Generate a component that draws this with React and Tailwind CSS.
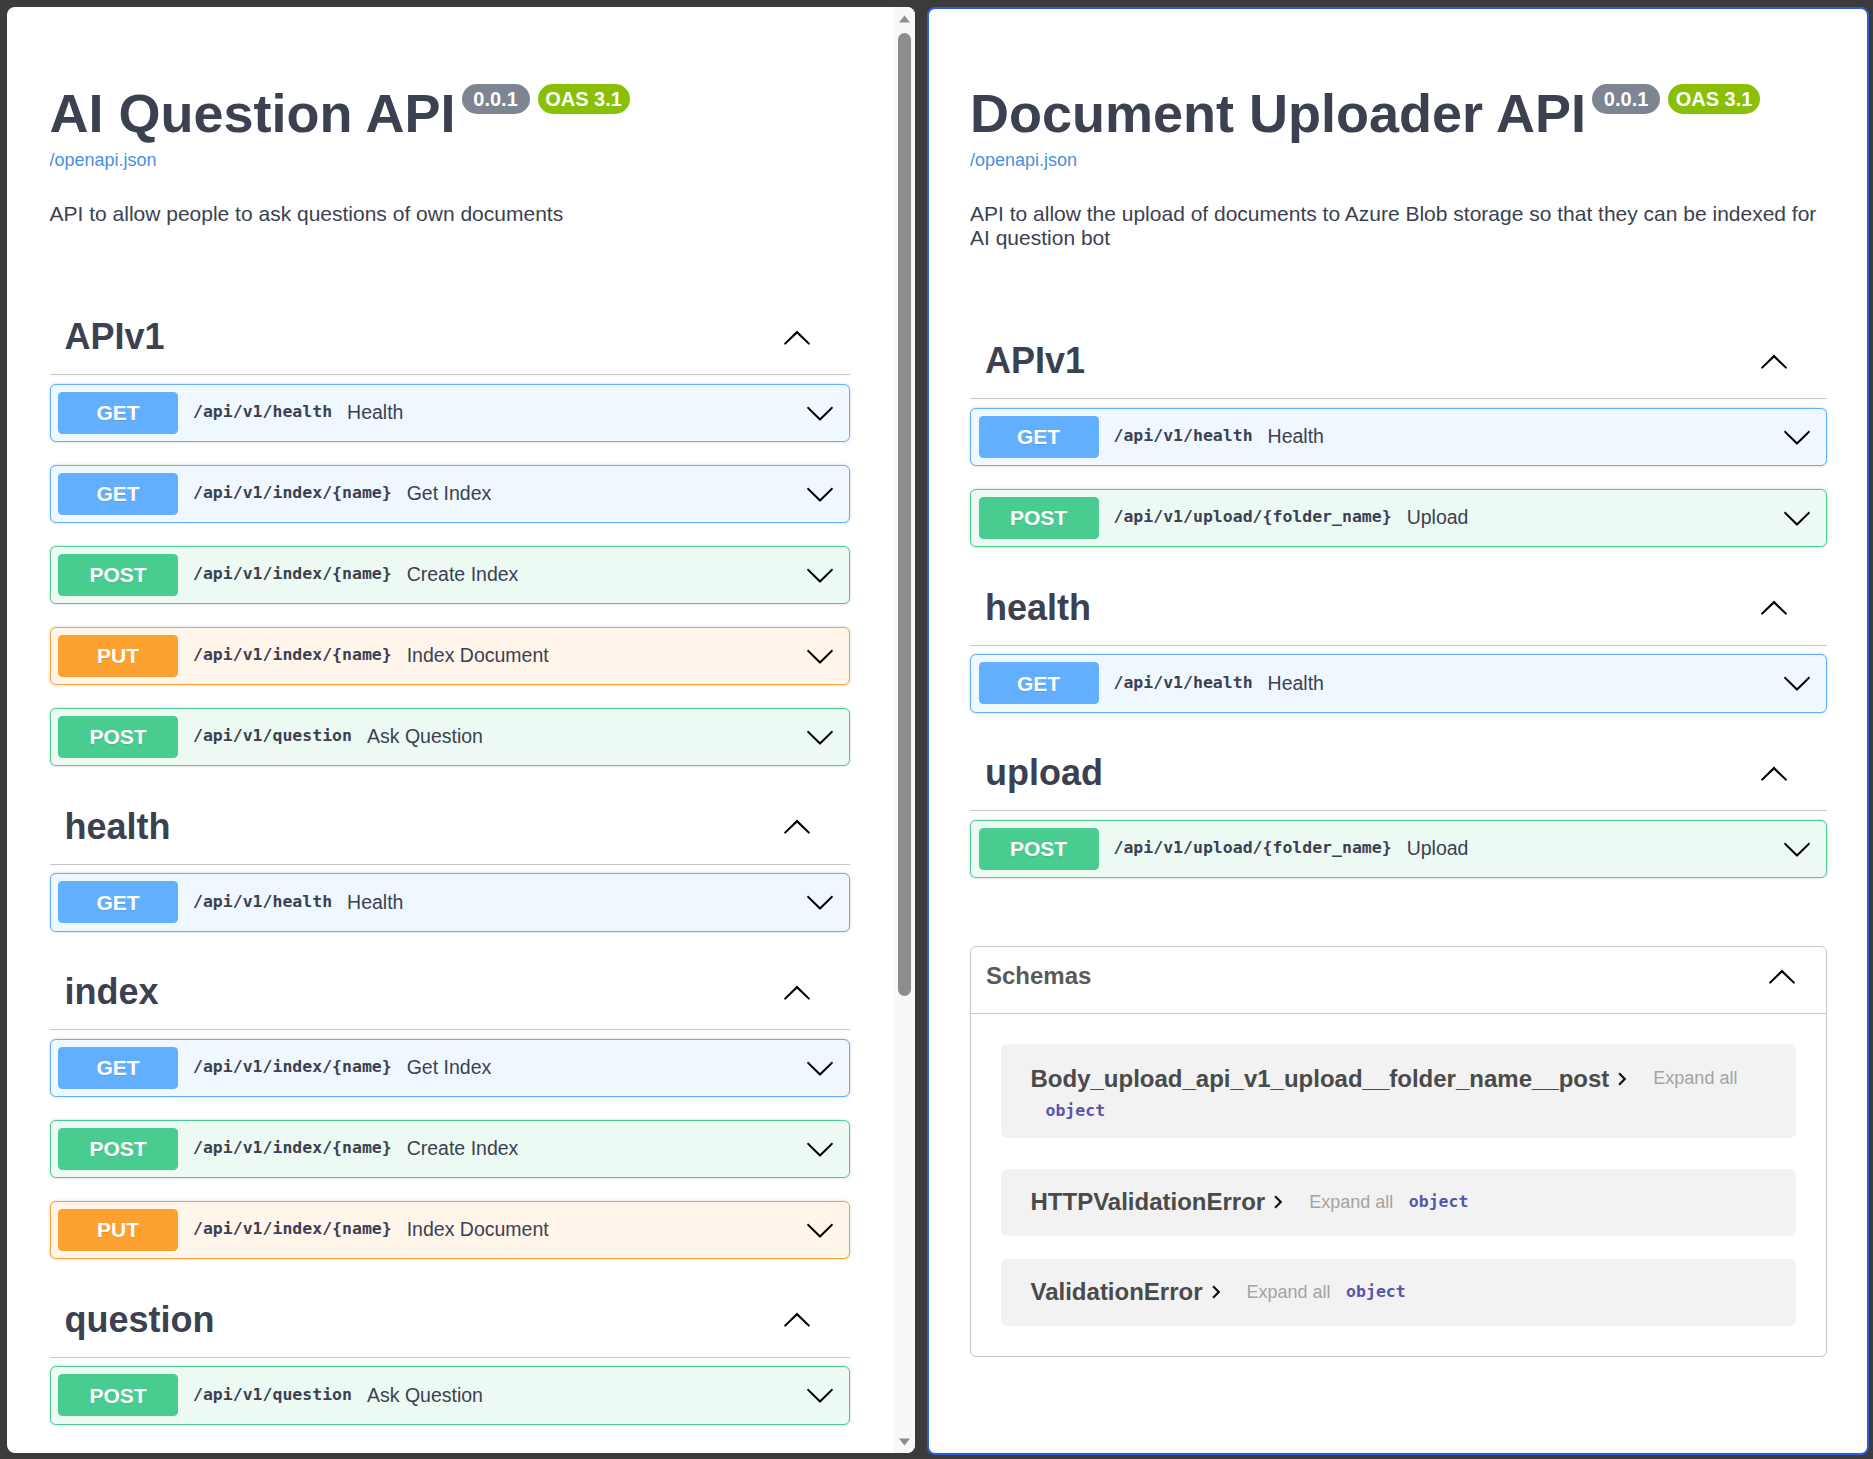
import React from "react";

const METHOD = {
  GET: { row: "bg-[#eff7ff] border-[#61affe]", badge: "bg-[#61affe]" },
  POST: { row: "bg-[#edfaf4] border-[#49cc90]", badge: "bg-[#49cc90]" },
  PUT: { row: "bg-[#fff5ea] border-[#fca130]", badge: "bg-[#fca130]" },
};

function ChevronDown({ className }) {
  return (
    <svg viewBox="0 0 20 20" className={className} fill="currentColor">
      <path d="M17.418 6.109c.272-.268.709-.268.979 0s.271.701 0 .969l-7.908 7.83c-.27.268-.707.268-.979 0l-7.908-7.83c-.27-.268-.27-.701 0-.969.271-.268.709-.268.979 0L10 13.25l7.418-7.141z" />
    </svg>
  );
}

function ChevronUp({ className }) {
  return (
    <svg viewBox="0 0 20 20" className={className} fill="currentColor">
      <path d="M17.418 14.908c.272.268.709.268.979 0s.271-.701 0-.969l-7.908-7.83c-.27-.268-.707-.268-.979 0l-7.908 7.83c-.27.268-.27.701 0 .969.271.268.709.268.979 0L10 7.771l7.418 7.137z" />
    </svg>
  );
}

function ModelArrow() {
  return (
    <svg viewBox="0 0 24 24" className="w-[26px] h-[26px] shrink-0 text-[#111]" fill="currentColor">
      <path d="M10 6L8.59 7.41 13.17 12l-4.58 4.59L10 18l6-6z" />
    </svg>
  );
}

function Op({ method, path, desc }) {
  const m = METHOD[method];
  return (
    <div
      className={`flex items-center h-[58.5px] mb-[22.5px] border rounded-[6px] pl-[7.5px] pr-[14.5px] shadow-[0_0_3px_rgba(0,0,0,0.19)] ${m.row}`}
    >
      <div
        className={`w-[120px] h-[42px] shrink-0 rounded-[4.5px] flex items-center justify-center text-white font-bold text-[21px] [text-shadow:0_1px_0_rgba(0,0,0,0.1)] ${m.badge}`}
      >
        {method}
      </div>
      <span className="ml-[15px] font-['DejaVu_Sans_Mono',monospace] font-bold text-[16.5px] text-[#3b4151] whitespace-nowrap">
        {path}
      </span>
      <span className="ml-[15px] text-[19.5px] text-[#3b4151] whitespace-nowrap">{desc}</span>
      <ChevronDown className="ml-auto w-[30px] h-[30px] text-black shrink-0" />
    </div>
  );
}

function Tag({ name }) {
  return (
    <div className="flex items-center h-[76px] border-b border-[#c4c6cb] pl-[15px] pr-[38px] mb-[8.5px]">
      <span className="text-[36px] font-bold text-[#3b4151] leading-[41px]">{name}</span>
      <ChevronUp className="ml-auto w-[30px] h-[30px] text-black shrink-0" />
    </div>
  );
}

function Section({ name, ops }) {
  return (
    <div>
      <Tag name={name} />
      {ops.map((o, i) => (
        <Op key={i} {...o} />
      ))}
    </div>
  );
}

function Info({ title, desc }) {
  return (
    <div>
      <div className="flex items-start h-[62px]">
        <h2 className="text-[54px] leading-[62px] font-bold text-[#3b4151] whitespace-nowrap">{title}</h2>
        <span className="ml-[6px] mt-[2px] w-[68px] h-[30px] shrink-0 rounded-full bg-[#7d8492] text-white font-bold text-[20px] leading-[30px] text-center">
          0.0.1
        </span>
        <span className="ml-[8px] mt-[2px] w-[92px] h-[30px] shrink-0 rounded-full bg-[#89bf04] text-white font-bold text-[20px] leading-[30px] text-center">
          OAS 3.1
        </span>
      </div>
      <div className="mt-[5.5px] text-[18px] leading-[21px] text-[#4990e2]">/openapi.json</div>
      <p className="mt-[31px] text-[21px] leading-[24px] text-[#3b4151]">{desc}</p>
    </div>
  );
}

const GH = { method: "GET", path: "/api/v1/health", desc: "Health" };
const GI = { method: "GET", path: "/api/v1/index/{name}", desc: "Get Index" };
const PI = { method: "POST", path: "/api/v1/index/{name}", desc: "Create Index" };
const UI = { method: "PUT", path: "/api/v1/index/{name}", desc: "Index Document" };
const PQ = { method: "POST", path: "/api/v1/question", desc: "Ask Question" };
const PU = { method: "POST", path: "/api/v1/upload/{folder_name}", desc: "Upload" };

function Obj() {
  return (
    <span className="font-['DejaVu_Sans_Mono',monospace] font-bold text-[16.5px] text-[#5555aa] whitespace-nowrap">
      object
    </span>
  );
}

function ModelName({ name }) {
  return (
    <>
      <span className="text-[24px] leading-[28px] font-bold text-[#4a4a4a] whitespace-nowrap">{name}</span>
      <ModelArrow />
      <span className="ml-[18px] text-[18px] text-[#a3a3a3] whitespace-nowrap">Expand all</span>
    </>
  );
}

export default function App() {
  return (
    <div className="w-[1873px] h-[1459px] bg-[#3b3b3b] flex items-start pl-[7px] pt-[7px] gap-[12px] overflow-hidden font-['Liberation_Sans',Arial,sans-serif]">
      {/* Left panel */}
      <div className="w-[908px] h-[1446px] shrink-0 bg-white rounded-[8px] overflow-hidden flex">
        <div className="flex-1 min-w-0 overflow-hidden pl-[42.5px] pr-[43px] pt-[75px]">
          <Info title="AI Question API" desc="API to allow people to ask questions of own documents" />
          <div className="mt-[73.5px]">
            <Section name="APIv1" ops={[GH, GI, PI, UI, PQ]} />
            <Section name="health" ops={[GH]} />
            <Section name="index" ops={[GI, PI, UI]} />
            <Section name="question" ops={[PQ]} />
          </div>
        </div>
        <div className="w-[22px] shrink-0 bg-[#f8f8f8] flex flex-col items-center pt-[7px] pb-[6px]">
          <svg width="13" height="9" viewBox="0 0 13 9">
            <path d="M6.5 1.5 L12 8.5 L1 8.5 Z" fill="#8d8d8d" />
          </svg>
          <div className="mt-[10px] w-[13px] h-[963px] rounded-full bg-[#8d8d8d]" />
          <div className="flex-1" />
          <svg width="13" height="9" viewBox="0 0 13 9">
            <path d="M1 0.5 L12 0.5 L6.5 7.5 Z" fill="#8d8d8d" />
          </svg>
        </div>
      </div>

      {/* Right panel */}
      <div className="w-[942px] h-[1448px] shrink-0 bg-white rounded-[8px] border-2 border-[#2b5fd9] overflow-hidden pl-[41px] pr-[40px] pt-[73px]">
        <Info
          title="Document Uploader API"
          desc="API to allow the upload of documents to Azure Blob storage so that they can be indexed for AI question bot"
        />
        <div className="mt-[73.5px]">
          <Section name="APIv1" ops={[GH, PU]} />
          <Section name="health" ops={[GH]} />
          <Section name="upload" ops={[PU]} />
        </div>

        <div className="mt-[67.5px] border border-[#c4c6cb] rounded-[6px]">
          <div className="flex items-center h-[67px] border-b border-[#c4c6cb] pl-[15px] pr-[29px] pb-[7px]">
            <span className="text-[24px] font-bold text-[#5a5a5a]">Schemas</span>
            <ChevronUp className="ml-auto w-[30px] h-[30px] text-black shrink-0" />
          </div>
          <div className="px-[30px] pt-[30px] pb-[30px]">
            <div className="bg-[#f2f2f2] rounded-[6px] pl-[29.5px] pt-[21px] pb-[8px]">
              <div className="flex items-center h-[28px]">
                <ModelName name="Body_upload_api_v1_upload__folder_name__post" />
              </div>
              <div className="flex items-center h-[37px] pl-[15px]">
                <Obj />
              </div>
            </div>
            <div className="mt-[31px] bg-[#f2f2f2] rounded-[6px] pl-[29.5px] h-[67px] flex items-center">
              <ModelName name="HTTPValidationError" />
              <span className="ml-[15.5px]">
                <Obj />
              </span>
            </div>
            <div className="mt-[23px] bg-[#f2f2f2] rounded-[6px] pl-[29.5px] h-[67px] flex items-center">
              <ModelName name="ValidationError" />
              <span className="ml-[15.5px]">
                <Obj />
              </span>
            </div>
          </div>
        </div>
      </div>
    </div>
  );
}
